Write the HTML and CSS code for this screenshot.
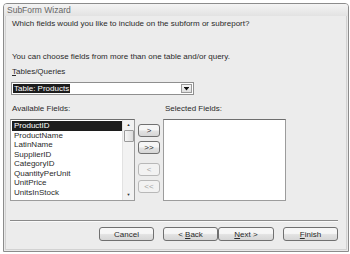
FILE: index.html
```html
<!DOCTYPE html>
<html lang="en">
<head>
    <meta charset="UTF-8">
    <title>SubForm Wizard</title>
    <link rel="stylesheet" href="styles.css">
</head>
<body>
    <div class="window">
        <div class="titlebar">SubForm Wizard</div>
        <div class="content">
            <p class="text question">Which fields would you like to include on the subform or subreport?</p>
            <p class="text hint">You can choose fields from more than one table and/or query.</p>
            <p class="text label-tables"><u>T</u>ables/Queries</p>
            <div class="combo">
                <span class="combo-value"><span class="selected-text">Table: Products</span></span>
                <span class="combo-btn">
                    <svg width="5" height="4" viewBox="0 0 5 4"><path d="M0 0h5v1H0zM0.5 1h4L2.5 3.5z" fill="#111"/></svg>
                </span>
            </div>

            <div class="fields">
                <div class="col col-available">
                    <p class="text col-label">Available Fields:</p>
                    <div class="listbox">
                        <ul class="items">
                            <li class="active">ProductID</li>
                            <li>ProductName</li>
                            <li>LatinName</li>
                            <li>SupplierID</li>
                            <li>CategoryID</li>
                            <li>QuantityPerUnit</li>
                            <li>UnitPrice</li>
                            <li>UnitsInStock</li>
                        </ul>
                        <div class="scrollbar">
                            <span class="arrow">&#9650;</span>
                            <span class="thumb"></span>
                            <span class="arrow arrow-down">&#9660;</span>
                        </div>
                    </div>
                </div>
                <div class="movers">
                    <button class="btn mover">&gt;</button>
                    <button class="btn mover">&gt;&gt;</button>
                    <button class="btn mover disabled gap">&lt;</button>
                    <button class="btn mover disabled">&lt;&lt;</button>
                </div>
                <div class="col col-selected">
                    <p class="text col-label">Selected Fields:</p>
                    <div class="listbox"></div>
                </div>
            </div>

            <div class="separator"></div>

            <div class="actions">
                <button class="btn action cancel">Cancel</button>
                <button class="btn action back">&lt; <u>B</u>ack</button>
                <button class="btn action next"><u>N</u>ext &gt;</button>
                <button class="btn action finish"><u>F</u>inish</button>
            </div>
        </div>
    </div>
</body>
</html>
```

FILE: styles.css
```css
body {
    margin: 0;
    padding: 0;
    background-color: #fff;
    font-family: "Liberation Sans", Arial, sans-serif;
    font-size: 8px;
    color: #2a2a2a;
}
.window {
    margin: 3px;
    width: 344px;
    height: 247px;
    border: 1px solid #8c8c8c;
    border-radius: 4px 4px 0 0;
    background-color: #e9e9e9;
    display: flex;
    flex-direction: column;
}
.titlebar {
    height: 12px;
    line-height: 12px;
    padding-left: 3px;
    font-size: 8.5px;
    color: #666;
    background: linear-gradient(#f4f4f4, #e2e2e2);
    border-radius: 3px 3px 0 0;
}
.content {
    flex: 1;
    margin: 0 1px 1px;
    padding: 3px 8px 0 4px;
    background-color: #ececec;
    border: 1px solid #d2d2d2;
    border-top: none;
}
.text {
    margin: 0;
    line-height: 10px;
    padding-left: 2px;
    white-space: nowrap;
}
.hint {
    margin-top: 23px;
}
.label-tables {
    margin-top: 5px;
}
.combo {
    margin: 5px 0 0 1px;
    width: 181px;
    height: 11px;
    border: 1px solid #8f8f8f;
    background-color: #fff;
    display: flex;
}
.combo-value {
    flex: 1;
    padding: 1px 0 0 1px;
}
.selected-text {
    display: inline-block;
    background-color: #1c1c1c;
    color: #fff;
    line-height: 9px;
    padding: 0 1px;
}
.combo-btn {
    width: 9px;
    margin: 1px;
    border: 1px solid #9a9a9a;
    background: linear-gradient(#f7f7f7, #dedede);
    display: flex;
    align-items: center;
    justify-content: center;
}
.fields {
    margin-top: 9px;
    display: flex;
    gap: 3px;
}
.col-label {
    margin-bottom: 5px;
}
.col-available .listbox {
    width: 123px;
}
.col-selected .listbox {
    width: 121px;
}
.listbox {
    height: 80px;
    border: 1px solid #9c9c9c;
    border-top-color: #6e6e6e;
    background-color: #fff;
    display: flex;
}
.items {
    list-style: none;
    margin: 0;
    padding: 1px 0 0 1px;
    flex: 1;
}
.items li {
    line-height: 9.5px;
    height: 9.5px;
    padding-left: 2px;
}
.items li.active {
    background-color: #1c1c1c;
    color: #fff;
}
.scrollbar {
    width: 11px;
    border-left: 1px solid #e2e2e2;
    background-color: #f2f2f2;
    display: flex;
    flex-direction: column;
    align-items: center;
}
.arrow {
    font-size: 4px;
    line-height: 10px;
    color: #333;
}
.arrow-down {
    margin-top: auto;
}
.thumb {
    width: 8px;
    height: 10px;
    border: 1px solid #9a9a9a;
    border-radius: 1px;
    background: linear-gradient(90deg, #f6f6f6, #dcdcdc);
}
.movers {
    margin-top: 20px;
    display: flex;
    flex-direction: column;
    gap: 4px;
}
.btn {
    font-family: "Liberation Sans", Arial, sans-serif;
    font-size: 8px;
    color: #2a2a2a;
    padding: 0;
    border: 1px solid #707070;
    border-radius: 3px;
    background: linear-gradient(#f6f6f6 45%, #e2e2e2 55%, #d6d6d6);
}
.mover {
    width: 22px;
    height: 13px;
    line-height: 10px;
}
.mover.gap {
    margin-top: 5px;
}
.mover.disabled {
    color: #a6a6a6;
    border-color: #b8b8b8;
    background: #f2f2f2;
}
.separator {
    margin-top: 19px;
    height: 1px;
    background-color: #8a8a8a;
    border-bottom: 1px solid #fafafa;
}
.actions {
    margin-top: 5px;
    display: flex;
    justify-content: flex-end;
}
.action {
    width: 55px;
    height: 14px;
}
.cancel {
    margin-right: 9px;
}
.next {
    width: 56px;
    margin-right: 9px;
}
```
